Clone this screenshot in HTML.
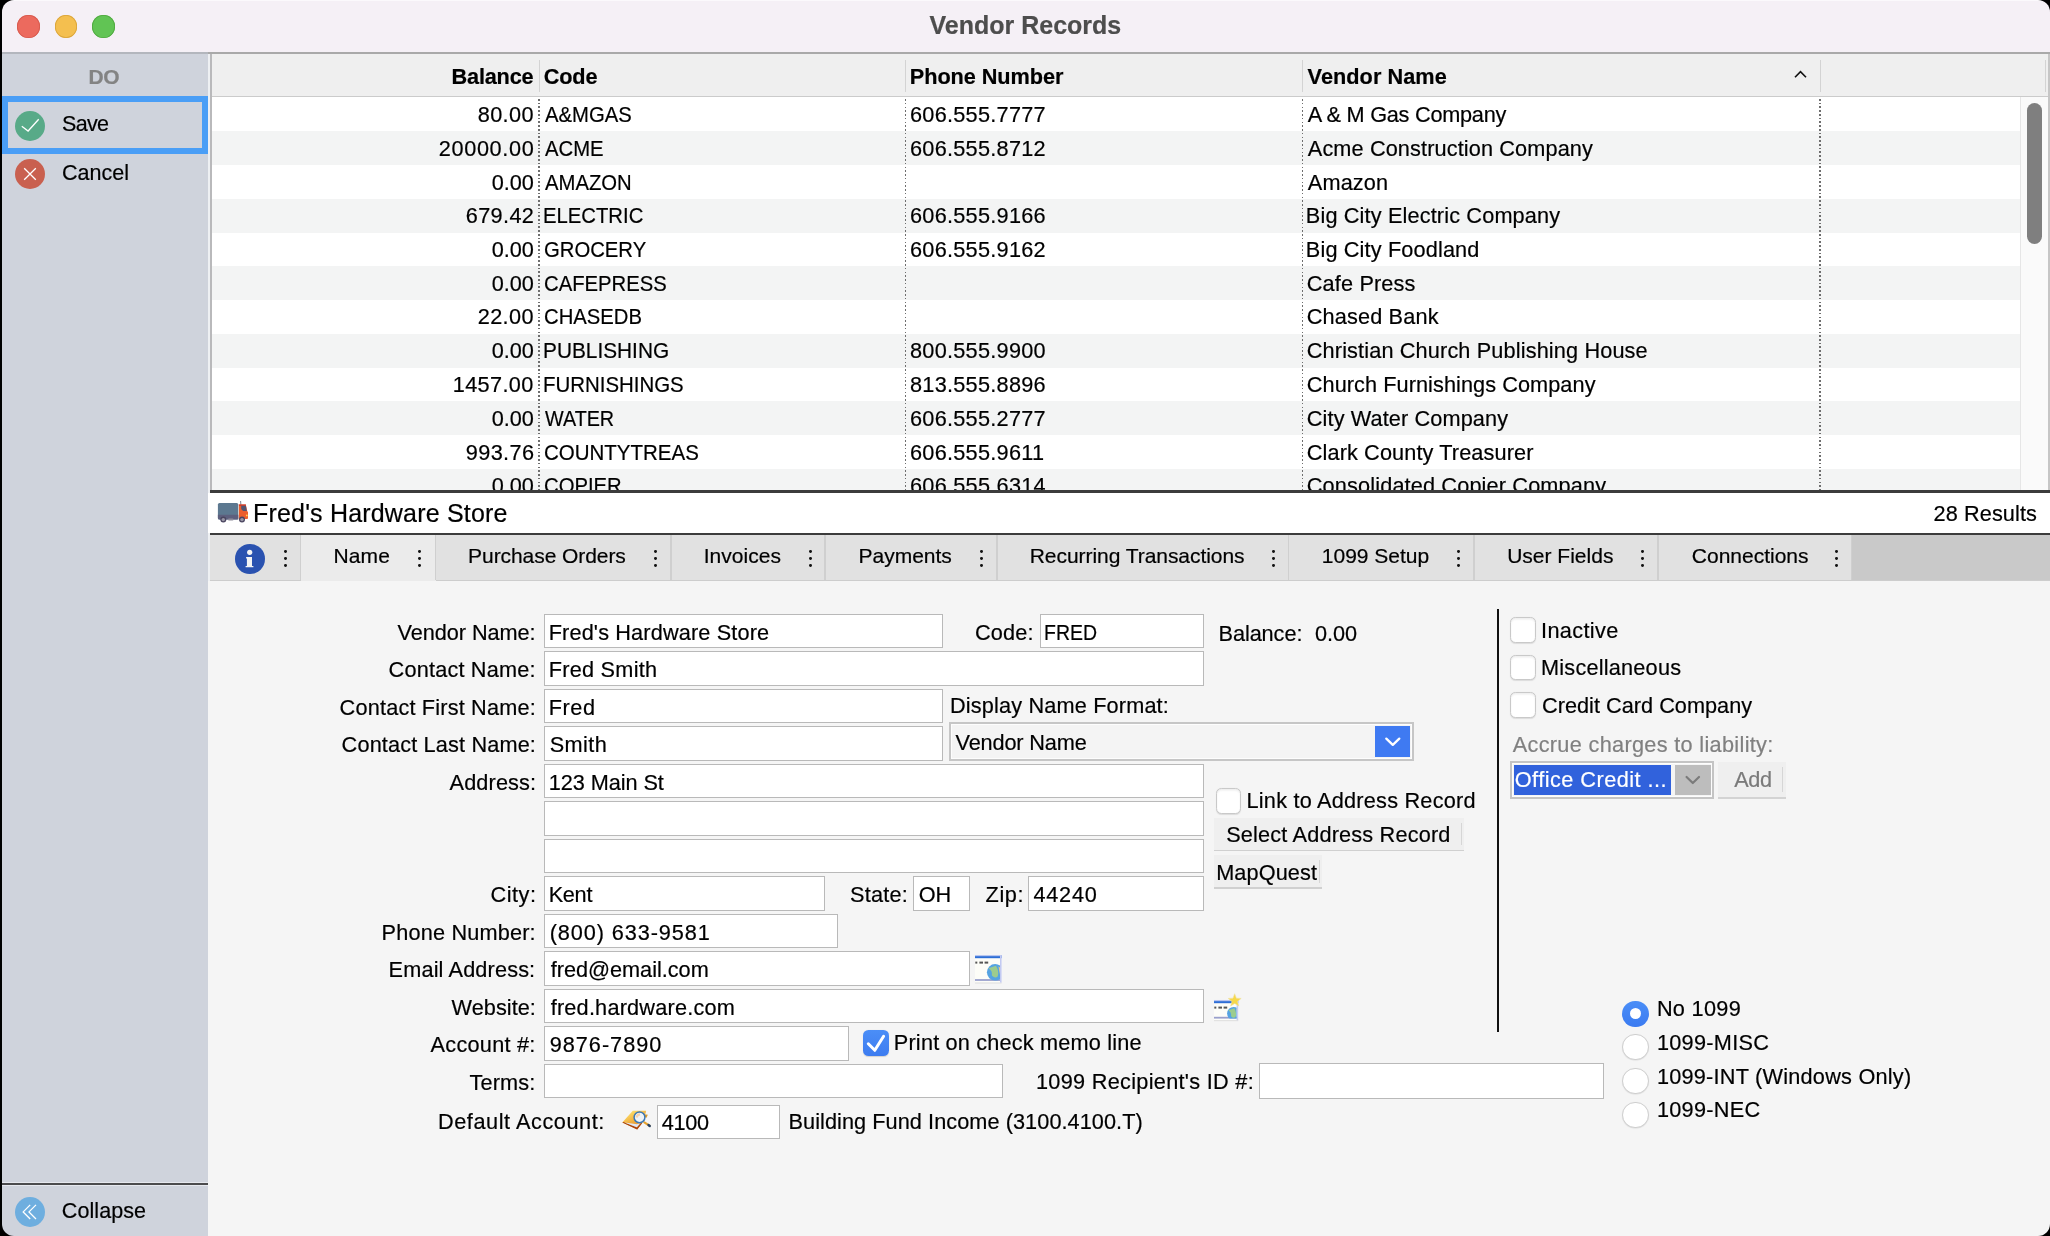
<!DOCTYPE html>
<html><head><meta charset="utf-8"><title>Vendor Records</title>
<style>
html,body{margin:0;padding:0;}
body{width:2050px;height:1236px;background:#000;overflow:hidden;position:relative;font-family:"Liberation Sans",sans-serif;color:#000;}
#win{will-change:transform;position:absolute;left:0;top:0;width:2050px;height:1236px;overflow:hidden;clip-path:inset(0 0 0 2px round 12px);}
.t{position:absolute;white-space:pre;-webkit-text-stroke:0.2px currentColor;}
.r{position:absolute;}
</style></head><body><div id="win">
<div class="r" style="left:2.00px;top:0.00px;width:2048.00px;height:52.50px;background:#f5f0f6;"></div>
<div class="r" style="left:2.00px;top:0.00px;width:2048.00px;height:1.00px;background:#fbf9fc;"></div>
<div class="r" style="left:2.00px;top:52.00px;width:206.00px;height:1.50px;background:#b3b6bd;"></div>
<div class="r" style="left:208.00px;top:52.00px;width:1842.00px;height:1.50px;background:#a9a9a9;"></div>
<div class="r" style="left:17.00px;top:15.00px;width:22.60px;height:22.60px;background:#ec6a5e;border-radius:50%;box-shadow:inset 0 0 0 0.8px #d65a4e;"></div>
<div class="r" style="left:54.60px;top:15.00px;width:22.60px;height:22.60px;background:#f4bf4f;border-radius:50%;box-shadow:inset 0 0 0 0.8px #d9a43a;"></div>
<div class="r" style="left:92.20px;top:15.00px;width:22.60px;height:22.60px;background:#61c454;border-radius:50%;box-shadow:inset 0 0 0 0.8px #4fa83f;"></div>
<div class="t" style="top:13px;font-size:25px;line-height:25px;font-weight:700;color:#4d4d4d;left:929.50px;">Vendor Records</div>
<div class="r" style="left:2.00px;top:53.50px;width:206.00px;height:1182.50px;background:#cfd3dc;"></div>
<div class="r" style="left:208.00px;top:53.50px;width:2.00px;height:1182.50px;background:#eef0f3;"></div>
<div class="r" style="left:210.00px;top:53.50px;width:1.80px;height:436.70px;background:#b9b9bb;"></div>
<div class="r" style="left:210.00px;top:490.20px;width:1.80px;height:745.80px;background:#eef0f3;"></div>
<div class="t" style="top:66px;font-size:21px;line-height:21px;font-weight:700;color:#838383;letter-spacing:-0.3px;left:88.50px;">DO</div>
<div class="r" style="left:2.00px;top:96.00px;width:206.00px;height:57.50px;box-sizing:border-box;border:6px solid #4a9ef6;"></div>
<div class="r" style="left:15.10px;top:110.80px;width:30.00px;height:30.00px;background:#58aa88;border-radius:50%;"></div>
<svg class="r" style="left:15.1px;top:110.8px" width="30" height="30" viewBox="0 0 30 30"><path d="M6.8 15.2 L13.1 20 L23.7 8.3" fill="none" stroke="#fff" stroke-width="1.3"/></svg>
<div class="t" style="top:114px;font-size:21.5px;line-height:21.5px;letter-spacing:-0.7px;left:62.10px;">Save</div>
<div class="r" style="left:15.10px;top:159.40px;width:30.00px;height:30.00px;background:#c9604f;border-radius:50%;"></div>
<svg class="r" style="left:15.1px;top:159.4px" width="30" height="30" viewBox="0 0 30 30"><path d="M9.2 9.2 L20.8 20.8 M20.8 9.2 L9.2 20.8" fill="none" stroke="#fff" stroke-width="1.3"/></svg>
<div class="t" style="top:163px;font-size:21.5px;line-height:21.5px;letter-spacing:-0.02px;left:62.10px;">Cancel</div>
<div class="r" style="left:2.00px;top:1182.30px;width:206.00px;height:0.70px;background:#e6e8ee;"></div>
<div class="r" style="left:2.00px;top:1183.00px;width:206.00px;height:2.30px;background:#4b4b4d;"></div>
<div class="r" style="left:2.00px;top:1185.30px;width:206.00px;height:0.90px;background:#e6e8ee;"></div>
<div class="r" style="left:15.10px;top:1196.70px;width:30.00px;height:30.00px;background:#6eaedf;border-radius:50%;"></div>
<svg class="r" style="left:15.1px;top:1196.7px" width="30" height="30" viewBox="0 0 30 30"><path d="M15.2 7.9 L8.2 14.9 L15.2 22 M21 7.9 L14 14.9 L21 22" fill="none" stroke="#fff" stroke-width="1.3"/></svg>
<div class="t" style="top:1201px;font-size:21.5px;line-height:21.5px;letter-spacing:0.086px;left:61.80px;">Collapse</div>
<div class="r" style="left:211.80px;top:53.50px;width:1838.20px;height:42.50px;background:#efefef;"></div>
<div class="r" style="left:211.80px;top:96.00px;width:1838.20px;height:1.60px;background:#cbcbcb;"></div>
<div class="r" style="left:211.8px;top:97px;width:1838.2px;height:393.20px;overflow:hidden;background:#fff">
<div class="t" style="top:7px;font-size:21.7px;line-height:21.7px;letter-spacing:0.35px;right:1516.17px;">80.00</div>
<div class="t" style="top:7px;font-size:21.7px;line-height:21.7px;transform:scaleX(0.935);transform-origin:0 0;left:333.10px;">A&amp;MGAS</div>
<div class="t" style="top:7px;font-size:21.7px;line-height:21.7px;letter-spacing:0.27px;left:698.20px;">606.555.7777</div>
<div class="t" style="top:7px;font-size:21.7px;line-height:21.7px;letter-spacing:-0.25px;left:1096.00px;">A &amp; M Gas Company</div>
<div class="r" style="left:0;top:34.35px;width:1808.50px;height:33.75px;background:#f3f4f4"></div>
<div class="t" style="top:41px;font-size:21.7px;line-height:21.7px;letter-spacing:0.643px;right:1515.59px;">20000.00</div>
<div class="t" style="top:41px;font-size:21.7px;line-height:21.7px;transform:scaleX(0.935);transform-origin:0 0;left:333.10px;">ACME</div>
<div class="t" style="top:41px;font-size:21.7px;line-height:21.7px;letter-spacing:0.27px;left:698.20px;">606.555.8712</div>
<div class="t" style="top:41px;font-size:21.7px;line-height:21.7px;letter-spacing:0.125px;left:1096.00px;">Acme Construction Company</div>
<div class="t" style="top:75px;font-size:21.7px;line-height:21.7px;letter-spacing:-0.033px;right:1516.11px;">0.00</div>
<div class="t" style="top:75px;font-size:21.7px;line-height:21.7px;transform:scaleX(0.935);transform-origin:0 0;left:333.10px;">AMAZON</div>
<div class="t" style="top:75px;font-size:21.7px;line-height:21.7px;letter-spacing:0.15px;left:1096.00px;">Amazon</div>
<div class="r" style="left:0;top:101.85px;width:1808.50px;height:33.75px;background:#f3f4f4"></div>
<div class="t" style="top:108px;font-size:21.7px;line-height:21.7px;letter-spacing:0.35px;right:1515.76px;">679.42</div>
<div class="t" style="top:108px;font-size:21.7px;line-height:21.7px;transform:scaleX(0.935);transform-origin:0 0;left:331.23px;">ELECTRIC</div>
<div class="t" style="top:108px;font-size:21.7px;line-height:21.7px;letter-spacing:0.27px;left:698.20px;">606.555.9166</div>
<div class="t" style="top:108px;font-size:21.7px;line-height:21.7px;letter-spacing:0.15px;left:1094.00px;">Big City Electric Company</div>
<div class="t" style="top:142px;font-size:21.7px;line-height:21.7px;letter-spacing:-0.033px;right:1516.11px;">0.00</div>
<div class="t" style="top:142px;font-size:21.7px;line-height:21.7px;transform:scaleX(0.935);transform-origin:0 0;left:332.17px;">GROCERY</div>
<div class="t" style="top:142px;font-size:21.7px;line-height:21.7px;letter-spacing:0.27px;left:698.20px;">606.555.9162</div>
<div class="t" style="top:142px;font-size:21.7px;line-height:21.7px;letter-spacing:0.15px;left:1094.00px;">Big City Foodland</div>
<div class="r" style="left:0;top:169.35px;width:1808.50px;height:33.75px;background:#f3f4f4"></div>
<div class="t" style="top:176px;font-size:21.7px;line-height:21.7px;letter-spacing:-0.033px;right:1516.11px;">0.00</div>
<div class="t" style="top:176px;font-size:21.7px;line-height:21.7px;transform:scaleX(0.935);transform-origin:0 0;left:332.17px;">CAFEPRESS</div>
<div class="t" style="top:176px;font-size:21.7px;line-height:21.7px;letter-spacing:0.15px;left:1095.00px;">Cafe Press</div>
<div class="t" style="top:209px;font-size:21.7px;line-height:21.7px;letter-spacing:0.35px;right:1516.17px;">22.00</div>
<div class="t" style="top:209px;font-size:21.7px;line-height:21.7px;transform:scaleX(0.935);transform-origin:0 0;left:332.17px;">CHASEDB</div>
<div class="t" style="top:209px;font-size:21.7px;line-height:21.7px;letter-spacing:0.15px;left:1095.00px;">Chased Bank</div>
<div class="r" style="left:0;top:236.85px;width:1808.50px;height:33.75px;background:#f3f4f4"></div>
<div class="t" style="top:243px;font-size:21.7px;line-height:21.7px;letter-spacing:-0.033px;right:1516.11px;">0.00</div>
<div class="t" style="top:243px;font-size:21.7px;line-height:21.7px;transform:scaleX(0.96);transform-origin:0 0;left:331.18px;">PUBLISHING</div>
<div class="t" style="top:243px;font-size:21.7px;line-height:21.7px;letter-spacing:0.27px;left:698.20px;">800.555.9900</div>
<div class="t" style="top:243px;font-size:21.7px;line-height:21.7px;letter-spacing:0.141px;left:1095.00px;">Christian Church Publishing House</div>
<div class="t" style="top:277px;font-size:21.7px;line-height:21.7px;letter-spacing:0.35px;right:1516.34px;">1457.00</div>
<div class="t" style="top:277px;font-size:21.7px;line-height:21.7px;transform:scaleX(0.942);transform-origin:0 0;left:331.22px;">FURNISHINGS</div>
<div class="t" style="top:277px;font-size:21.7px;line-height:21.7px;letter-spacing:0.27px;left:698.20px;">813.555.8896</div>
<div class="t" style="top:277px;font-size:21.7px;line-height:21.7px;letter-spacing:0.072px;left:1095.00px;">Church Furnishings Company</div>
<div class="r" style="left:0;top:304.35px;width:1808.50px;height:33.75px;background:#f3f4f4"></div>
<div class="t" style="top:311px;font-size:21.7px;line-height:21.7px;letter-spacing:-0.033px;right:1516.11px;">0.00</div>
<div class="t" style="top:311px;font-size:21.7px;line-height:21.7px;transform:scaleX(0.911);transform-origin:0 0;left:333.10px;">WATER</div>
<div class="t" style="top:311px;font-size:21.7px;line-height:21.7px;letter-spacing:0.27px;left:698.20px;">606.555.2777</div>
<div class="t" style="top:311px;font-size:21.7px;line-height:21.7px;letter-spacing:0.118px;left:1095.00px;">City Water Company</div>
<div class="t" style="top:345px;font-size:21.7px;line-height:21.7px;letter-spacing:0.38px;right:1515.58px;">993.76</div>
<div class="t" style="top:345px;font-size:21.7px;line-height:21.7px;transform:scaleX(0.945);transform-origin:0 0;left:332.15px;">COUNTYTREAS</div>
<div class="t" style="top:345px;font-size:21.7px;line-height:21.7px;letter-spacing:0.27px;left:698.20px;">606.555.9611</div>
<div class="t" style="top:345px;font-size:21.7px;line-height:21.7px;letter-spacing:0.114px;left:1095.00px;">Clark County Treasurer</div>
<div class="r" style="left:0;top:371.85px;width:1808.50px;height:33.75px;background:#f3f4f4"></div>
<div class="t" style="top:378px;font-size:21.7px;line-height:21.7px;letter-spacing:-0.033px;right:1516.11px;">0.00</div>
<div class="t" style="top:378px;font-size:21.7px;line-height:21.7px;transform:scaleX(0.935);transform-origin:0 0;left:332.17px;">COPIER</div>
<div class="t" style="top:378px;font-size:21.7px;line-height:21.7px;letter-spacing:0.27px;left:698.20px;">606.555.6314</div>
<div class="t" style="top:378px;font-size:21.7px;line-height:21.7px;letter-spacing:0.15px;left:1095.00px;">Consolidated Copier Company</div>
<div class="r" style="left:326.60px;top:1.60px;width:1.4px;height:400px;background:repeating-linear-gradient(to bottom,#6e6e6e 0,#6e6e6e 1.6px,transparent 1.6px,transparent 3.75px)"></div>
<div class="r" style="left:692.80px;top:1.60px;width:1.4px;height:400px;background:repeating-linear-gradient(to bottom,#6e6e6e 0,#6e6e6e 1.6px,transparent 1.6px,transparent 3.75px)"></div>
<div class="r" style="left:1090.30px;top:1.60px;width:1.4px;height:400px;background:repeating-linear-gradient(to bottom,#6e6e6e 0,#6e6e6e 1.6px,transparent 1.6px,transparent 3.75px)"></div>
<div class="r" style="left:1607.60px;top:1.60px;width:1.4px;height:400px;background:repeating-linear-gradient(to bottom,#6e6e6e 0,#6e6e6e 1.6px,transparent 1.6px,transparent 3.75px)"></div>
<div class="r" style="left:1808.50px;top:0;width:29.70px;height:400px;background:#fafafa;border-left:1px solid #e6e6e6;box-sizing:border-box"></div>
<div class="r" style="left:1815.50px;top:6.00px;width:15px;height:140.50px;background:#7f7f7f;border-radius:7.5px"></div>
</div>
<div class="t" style="top:66px;font-size:21.7px;line-height:21.7px;font-weight:700;letter-spacing:-0.2px;right:1516.60px;">Balance</div>
<div class="t" style="top:66px;font-size:21.7px;line-height:21.7px;font-weight:700;letter-spacing:-0.167px;left:543.80px;">Code</div>
<div class="t" style="top:66px;font-size:21.7px;line-height:21.7px;font-weight:700;letter-spacing:-0.055px;left:909.80px;">Phone Number</div>
<div class="t" style="top:66px;font-size:21.7px;line-height:21.7px;font-weight:700;letter-spacing:0.05px;left:1307.60px;">Vendor Name</div>
<div class="r" style="left:538.50px;top:60.00px;width:1.30px;height:31.70px;background:#d3d3d3;"></div>
<div class="r" style="left:904.70px;top:60.00px;width:1.30px;height:31.70px;background:#d3d3d3;"></div>
<div class="r" style="left:1302.20px;top:60.00px;width:1.30px;height:31.70px;background:#d3d3d3;"></div>
<div class="r" style="left:1819.50px;top:60.00px;width:1.30px;height:31.70px;background:#d3d3d3;"></div>
<div class="r" style="left:2044.50px;top:60.00px;width:1.30px;height:31.70px;background:#d3d3d3;"></div>
<svg class="r" style="left:1792px;top:68px" width="17" height="12" viewBox="0 0 17 12"><path d="M3 9.3 L8.5 3.6 L14 9.3" fill="none" stroke="#111" stroke-width="1.6"/></svg>
<div class="r" style="left:2048.00px;top:53.50px;width:2.00px;height:436.70px;background:#c6c6c6;"></div>
<div class="r" style="left:210.20px;top:490.20px;width:1839.80px;height:2.50px;background:#3c3c3c;"></div>
<div class="r" style="left:208.30px;top:492.70px;width:1841.70px;height:40.00px;background:#fff;"></div>
<div class="r" style="left:210.20px;top:532.70px;width:1839.80px;height:2.10px;background:#3c3c3c;"></div>
<svg class="r" style="left:212px;top:495px" width="44" height="35" viewBox="0 0 44 35"><rect x="5.9" y="7.9" width="20.4" height="16.7" rx="1.6" fill="#5c7890"/><path d="M5.9 19.8 H26.3 V24.6 H7.5 Q5.9 24.6 5.9 23 Z" fill="#5d5f7e"/><line x1="28.6" y1="6" x2="28.9" y2="10" stroke="#6b7280" stroke-width="0.9"/><path d="M26.9 9.5 H33.8 L35.3 16.2 L36 17 V23.5 L35 24.1 H26.9 Z" fill="#ec5f2e"/><rect x="26.9" y="9.5" width="7" height="1.3" fill="#d03528"/><path d="M29.2 10.8 H33.9 L34.8 15.9 H31.2 Q29.2 15 29.2 13.5 Z" fill="#515470"/><circle cx="34.8" cy="20.4" r="0.9" fill="#ffd84a"/><rect x="16" y="23.6" width="5.5" height="1.8" rx="0.9" fill="#8f8d9c"/><circle cx="11.3" cy="24.6" r="3" fill="#4b4660"/><circle cx="11.3" cy="24.6" r="1.7" fill="#9896a6"/><circle cx="30" cy="24.6" r="3" fill="#4b4660"/><circle cx="30" cy="24.6" r="1.7" fill="#9896a6"/></svg>
<div class="t" style="top:501px;font-size:25px;line-height:25px;letter-spacing:0.185px;left:253.00px;">Fred's Hardware Store</div>
<div class="t" style="top:503px;font-size:21.7px;line-height:21.7px;letter-spacing:0.1px;right:13.03px;">28 Results</div>
<div class="r" style="left:210.20px;top:534.80px;width:1839.80px;height:45.00px;background:#c9c9c9;"></div>
<div class="r" style="left:210.20px;top:579.80px;width:1839.80px;height:1.40px;background:#cdcdcd;"></div>
<div class="r" style="left:210.20px;top:534.80px;width:90.30px;height:45.00px;background:#e1e1e1;"></div>
<div class="r" style="left:283.85px;top:550.05px;width:2.90px;height:2.90px;background:#111;border-radius:50%;"></div>
<div class="r" style="left:283.85px;top:556.85px;width:2.90px;height:2.90px;background:#111;border-radius:50%;"></div>
<div class="r" style="left:283.85px;top:563.65px;width:2.90px;height:2.90px;background:#111;border-radius:50%;"></div>
<div class="r" style="left:300.50px;top:534.80px;width:135.00px;height:46.40px;background:#ebebeb;"></div>
<div class="r" style="left:299.50px;top:534.80px;width:1.80px;height:45.00px;background:#cfcfcf;"></div>
<div class="r" style="left:417.95px;top:550.05px;width:2.90px;height:2.90px;background:#111;border-radius:50%;"></div>
<div class="r" style="left:417.95px;top:556.85px;width:2.90px;height:2.90px;background:#111;border-radius:50%;"></div>
<div class="r" style="left:417.95px;top:563.65px;width:2.90px;height:2.90px;background:#111;border-radius:50%;"></div>
<div class="t" style="top:545px;font-size:21px;line-height:21px;letter-spacing:0.067px;left:333.60px;">Name</div>
<div class="r" style="left:435.50px;top:534.80px;width:235.30px;height:45.00px;background:#e1e1e1;"></div>
<div class="r" style="left:434.50px;top:534.80px;width:1.80px;height:45.00px;background:#cfcfcf;"></div>
<div class="r" style="left:653.95px;top:550.05px;width:2.90px;height:2.90px;background:#111;border-radius:50%;"></div>
<div class="r" style="left:653.95px;top:556.85px;width:2.90px;height:2.90px;background:#111;border-radius:50%;"></div>
<div class="r" style="left:653.95px;top:563.65px;width:2.90px;height:2.90px;background:#111;border-radius:50%;"></div>
<div class="t" style="top:545px;font-size:21px;line-height:21px;letter-spacing:-0.071px;left:468.10px;">Purchase Orders</div>
<div class="r" style="left:670.80px;top:534.80px;width:154.40px;height:45.00px;background:#e1e1e1;"></div>
<div class="r" style="left:669.80px;top:534.80px;width:1.80px;height:45.00px;background:#cfcfcf;"></div>
<div class="r" style="left:809.25px;top:550.05px;width:2.90px;height:2.90px;background:#111;border-radius:50%;"></div>
<div class="r" style="left:809.25px;top:556.85px;width:2.90px;height:2.90px;background:#111;border-radius:50%;"></div>
<div class="r" style="left:809.25px;top:563.65px;width:2.90px;height:2.90px;background:#111;border-radius:50%;"></div>
<div class="t" style="top:545px;font-size:21px;line-height:21px;letter-spacing:0.029px;left:703.70px;">Invoices</div>
<div class="r" style="left:825.20px;top:534.80px;width:171.80px;height:45.00px;background:#e1e1e1;"></div>
<div class="r" style="left:824.20px;top:534.80px;width:1.80px;height:45.00px;background:#cfcfcf;"></div>
<div class="r" style="left:980.05px;top:550.05px;width:2.90px;height:2.90px;background:#111;border-radius:50%;"></div>
<div class="r" style="left:980.05px;top:556.85px;width:2.90px;height:2.90px;background:#111;border-radius:50%;"></div>
<div class="r" style="left:980.05px;top:563.65px;width:2.90px;height:2.90px;background:#111;border-radius:50%;"></div>
<div class="t" style="top:545px;font-size:21px;line-height:21px;left:858.50px;">Payments</div>
<div class="r" style="left:997.00px;top:534.80px;width:291.60px;height:45.00px;background:#e1e1e1;"></div>
<div class="r" style="left:996.00px;top:534.80px;width:1.80px;height:45.00px;background:#cfcfcf;"></div>
<div class="r" style="left:1271.75px;top:550.05px;width:2.90px;height:2.90px;background:#111;border-radius:50%;"></div>
<div class="r" style="left:1271.75px;top:556.85px;width:2.90px;height:2.90px;background:#111;border-radius:50%;"></div>
<div class="r" style="left:1271.75px;top:563.65px;width:2.90px;height:2.90px;background:#111;border-radius:50%;"></div>
<div class="t" style="top:545px;font-size:21px;line-height:21px;letter-spacing:-0.048px;left:1029.70px;">Recurring Transactions</div>
<div class="r" style="left:1288.60px;top:534.80px;width:185.20px;height:45.00px;background:#e1e1e1;"></div>
<div class="r" style="left:1287.60px;top:534.80px;width:1.80px;height:45.00px;background:#cfcfcf;"></div>
<div class="r" style="left:1456.95px;top:550.05px;width:2.90px;height:2.90px;background:#111;border-radius:50%;"></div>
<div class="r" style="left:1456.95px;top:556.85px;width:2.90px;height:2.90px;background:#111;border-radius:50%;"></div>
<div class="r" style="left:1456.95px;top:563.65px;width:2.90px;height:2.90px;background:#111;border-radius:50%;"></div>
<div class="t" style="top:545px;font-size:21px;line-height:21px;left:1321.80px;">1099 Setup</div>
<div class="r" style="left:1473.80px;top:534.80px;width:184.20px;height:45.00px;background:#e1e1e1;"></div>
<div class="r" style="left:1472.80px;top:534.80px;width:1.80px;height:45.00px;background:#cfcfcf;"></div>
<div class="r" style="left:1641.05px;top:550.05px;width:2.90px;height:2.90px;background:#111;border-radius:50%;"></div>
<div class="r" style="left:1641.05px;top:556.85px;width:2.90px;height:2.90px;background:#111;border-radius:50%;"></div>
<div class="r" style="left:1641.05px;top:563.65px;width:2.90px;height:2.90px;background:#111;border-radius:50%;"></div>
<div class="t" style="top:545px;font-size:21px;line-height:21px;left:1507.20px;">User Fields</div>
<div class="r" style="left:1658.00px;top:534.80px;width:193.00px;height:45.00px;background:#e1e1e1;"></div>
<div class="r" style="left:1657.00px;top:534.80px;width:1.80px;height:45.00px;background:#cfcfcf;"></div>
<div class="r" style="left:1834.95px;top:550.05px;width:2.90px;height:2.90px;background:#111;border-radius:50%;"></div>
<div class="r" style="left:1834.95px;top:556.85px;width:2.90px;height:2.90px;background:#111;border-radius:50%;"></div>
<div class="r" style="left:1834.95px;top:563.65px;width:2.90px;height:2.90px;background:#111;border-radius:50%;"></div>
<div class="t" style="top:545px;font-size:21px;line-height:21px;left:1691.80px;">Connections</div>
<div class="r" style="left:1851.00px;top:534.80px;width:1.00px;height:45.00px;background:#cfcfcf;"></div>
<div class="r" style="left:234.80px;top:544.00px;width:29.80px;height:29.80px;background:#2a52b0;border-radius:50%;"></div>
<svg class="r" style="left:234.8px;top:544px" width="30" height="30" viewBox="0 0 30 30"><circle cx="14.7" cy="8.3" r="2.6" fill="#f4f4f4"/><path d="M11.1 13.1 H17 V22 H18.4 V23.3 H10.6 V22 H11.9 V14.5 H11.1 Z" fill="#f4f4f4"/></svg>
<div class="r" style="left:208.30px;top:581.20px;width:1841.70px;height:654.80px;background:#f5f5f5;"></div>
<div class="t" style="top:622px;font-size:21.7px;line-height:21.7px;letter-spacing:-0.055px;right:1514.42px;">Vendor Name:</div>
<div class="t" style="top:659px;font-size:21.7px;line-height:21.7px;letter-spacing:0.183px;right:1514.37px;">Contact Name:</div>
<div class="t" style="top:697px;font-size:21.7px;line-height:21.7px;letter-spacing:0.183px;right:1514.09px;">Contact First Name:</div>
<div class="t" style="top:734px;font-size:21.7px;line-height:21.7px;letter-spacing:0.153px;right:1513.98px;">Contact Last Name:</div>
<div class="t" style="top:772px;font-size:21.7px;line-height:21.7px;letter-spacing:0.114px;right:1513.90px;">Address:</div>
<div class="t" style="top:884px;font-size:21.7px;line-height:21.7px;letter-spacing:0.5px;right:1513.52px;">City:</div>
<div class="t" style="top:922px;font-size:21.7px;line-height:21.7px;letter-spacing:0.175px;right:1514.21px;">Phone Number:</div>
<div class="t" style="top:959px;font-size:21.7px;line-height:21.7px;letter-spacing:0.146px;right:1514.71px;">Email Address:</div>
<div class="t" style="top:997px;font-size:21.7px;line-height:21.7px;letter-spacing:0.043px;right:1514.07px;">Website:</div>
<div class="t" style="top:1034px;font-size:21.7px;line-height:21.7px;letter-spacing:0.256px;right:1514.35px;">Account #:</div>
<div class="t" style="top:1072px;font-size:21.7px;line-height:21.7px;letter-spacing:0.12px;right:1514.62px;">Terms:</div>
<div class="r" style="left:544.40px;top:613.60px;width:398.80px;height:34.80px;background:#fff;box-sizing:border-box;border:1.3px solid #b9b9b9;"></div>
<div class="t" style="top:622px;font-size:21.7px;line-height:21.7px;letter-spacing:0.145px;left:548.70px;">Fred's Hardware Store</div>
<div class="t" style="top:622px;font-size:21.7px;line-height:21.7px;letter-spacing:0.175px;right:1016.25px;">Code:</div>
<div class="r" style="left:1039.50px;top:613.60px;width:164.30px;height:34.80px;background:#fff;box-sizing:border-box;border:1.3px solid #b9b9b9;"></div>
<div class="t" style="top:622px;font-size:21.7px;line-height:21.7px;transform:scaleX(0.898);transform-origin:0 0;left:1044.00px;">FRED</div>
<div class="t" style="top:623px;font-size:21.7px;line-height:21.7px;letter-spacing:-0.071px;left:1218.50px;">Balance:</div>
<div class="t" style="top:623px;font-size:21.7px;line-height:21.7px;letter-spacing:-0.033px;left:1315.00px;">0.00</div>
<div class="r" style="left:544.40px;top:651.10px;width:659.40px;height:34.80px;background:#fff;box-sizing:border-box;border:1.3px solid #b9b9b9;"></div>
<div class="t" style="top:659px;font-size:21.7px;line-height:21.7px;letter-spacing:0.256px;left:548.70px;">Fred Smith</div>
<div class="r" style="left:544.40px;top:688.60px;width:398.80px;height:34.80px;background:#fff;box-sizing:border-box;border:1.3px solid #b9b9b9;"></div>
<div class="t" style="top:697px;font-size:21.7px;line-height:21.7px;letter-spacing:0.567px;left:548.70px;">Fred</div>
<div class="t" style="top:695px;font-size:21.7px;line-height:21.7px;letter-spacing:0.163px;left:950.00px;">Display Name Format:</div>
<div class="r" style="left:544.40px;top:726.10px;width:398.80px;height:34.80px;background:#fff;box-sizing:border-box;border:1.3px solid #b9b9b9;"></div>
<div class="t" style="top:734px;font-size:21.7px;line-height:21.7px;letter-spacing:0.425px;left:549.70px;">Smith</div>
<div class="r" style="left:949.00px;top:722.20px;width:465.00px;height:38.80px;background:#f4f4f4;box-sizing:border-box;border:2px solid #c6c6c6;box-shadow:inset 0 0 0 1px #fdfdfd;"></div>
<div class="r" style="left:1374.80px;top:725.90px;width:35.40px;height:31.60px;background:#3f7af2;"></div>
<svg class="r" style="left:1374.8px;top:725.9px" width="35.4" height="31.6" viewBox="0 0 35.4 31.6"><path d="M11.3 12.6 L17.8 18.9 L24.3 12.6" fill="none" stroke="#fff" stroke-width="2.3" stroke-linecap="round" stroke-linejoin="round"/></svg>
<div class="t" style="top:732px;font-size:21.7px;line-height:21.7px;letter-spacing:-0.15px;left:955.60px;">Vendor Name</div>
<div class="r" style="left:544.40px;top:763.60px;width:659.40px;height:34.80px;background:#fff;box-sizing:border-box;border:1.3px solid #b9b9b9;"></div>
<div class="t" style="top:772px;font-size:21.7px;line-height:21.7px;letter-spacing:-0.06px;left:548.70px;">123 Main St</div>
<div class="r" style="left:544.40px;top:801.10px;width:659.40px;height:34.80px;background:#fff;box-sizing:border-box;border:1.3px solid #b9b9b9;"></div>
<div class="r" style="left:544.40px;top:838.60px;width:659.40px;height:34.80px;background:#fff;box-sizing:border-box;border:1.3px solid #b9b9b9;"></div>
<div class="r" style="left:1215.50px;top:788.30px;width:25.50px;height:25.50px;background:#fff;border-radius:5.5px;box-sizing:border-box;border:1px solid #c9c9c9;box-shadow:0 0.5px 1px rgba(0,0,0,0.10), inset 0 1.5px 2px rgba(0,0,0,0.07);"></div>
<div class="t" style="top:790px;font-size:21.7px;line-height:21.7px;letter-spacing:0.229px;left:1246.50px;">Link to Address Record</div>
<div class="r" style="left:1214.00px;top:818.30px;width:250.00px;height:31.60px;background:#efefef;"></div>
<div class="r" style="left:1214.00px;top:849.90px;width:250.00px;height:1.30px;background:#d0d0d0;"></div>
<div class="r" style="left:1461.00px;top:823.30px;width:1.20px;height:21.90px;background:#d6d6d6;"></div>
<div class="t" style="top:824px;font-size:21.7px;line-height:21.7px;letter-spacing:0.18px;left:1226.20px;">Select Address Record</div>
<div class="r" style="left:1214.00px;top:855.40px;width:107.80px;height:31.90px;background:#efefef;"></div>
<div class="r" style="left:1214.00px;top:887.30px;width:107.80px;height:1.30px;background:#d0d0d0;"></div>
<div class="r" style="left:1318.80px;top:860.40px;width:1.20px;height:22.20px;background:#d6d6d6;"></div>
<div class="t" style="top:862px;font-size:21.7px;line-height:21.7px;letter-spacing:0.1px;left:1216.20px;">MapQuest</div>
<div class="r" style="left:544.40px;top:876.10px;width:280.20px;height:34.80px;background:#fff;box-sizing:border-box;border:1.3px solid #b9b9b9;"></div>
<div class="t" style="top:884px;font-size:21.7px;line-height:21.7px;letter-spacing:-0.3px;left:548.70px;">Kent</div>
<div class="t" style="top:884px;font-size:21.7px;line-height:21.7px;letter-spacing:0.24px;right:1141.89px;">State:</div>
<div class="r" style="left:913.40px;top:876.10px;width:56.30px;height:34.80px;background:#fff;box-sizing:border-box;border:1.3px solid #b9b9b9;"></div>
<div class="t" style="top:884px;font-size:21.7px;line-height:21.7px;left:918.70px;">OH</div>
<div class="t" style="top:884px;font-size:21.7px;line-height:21.7px;letter-spacing:0.633px;right:1025.81px;">Zip:</div>
<div class="r" style="left:1028.30px;top:876.10px;width:175.50px;height:34.80px;background:#fff;box-sizing:border-box;border:1.3px solid #b9b9b9;"></div>
<div class="t" style="top:884px;font-size:21.7px;line-height:21.7px;letter-spacing:0.7px;left:1033.60px;">44240</div>
<div class="r" style="left:544.40px;top:913.60px;width:293.60px;height:34.80px;background:#fff;box-sizing:border-box;border:1.3px solid #b9b9b9;"></div>
<div class="t" style="top:922px;font-size:21.7px;line-height:21.7px;letter-spacing:0.9px;left:549.70px;">(800) 633-9581</div>
<div class="r" style="left:544.40px;top:951.10px;width:425.30px;height:34.80px;background:#fff;box-sizing:border-box;border:1.3px solid #b9b9b9;"></div>
<div class="t" style="top:959px;font-size:21.7px;line-height:21.7px;letter-spacing:-0.015px;left:550.70px;">fred@email.com</div>
<svg class="r" style="left:969px;top:941px" width="40.6" height="43.5" viewBox="-6 -14 40.6 43.5"><rect x="0" y="26.5" width="26.6" height="2" fill="#dcdcdc"/><rect x="0" y="0" width="26.6" height="27.5" fill="#fdfdf8"/><rect x="0" y="0" width="26.6" height="3.2" fill="#2e6ed6"/><rect x="0" y="0" width="26.6" height="1.2" fill="#b9c6f0"/><rect x="25.0" y="0" width="1.6" height="27.5" fill="#c3caf2"/><rect x="0" y="24.1" width="25.0" height="1.8" fill="#9aa0cc"/><rect x="0.3" y="6.6" width="2" height="2" fill="#555"/><rect x="4.4" y="6.6" width="3.6" height="2" fill="#555"/><rect x="9.6" y="6.6" width="3.6" height="2" fill="#555"/><clipPath id="gc975"><rect x="0" y="0" width="25.0" height="25.9"/></clipPath><g clip-path="url(#gc975)"><circle cx="20.2" cy="17.3" r="8.3" fill="#55a3e2"/><path d="M13.56 13.15 Q17.71 15.64 16.88 20.62 Q20.20 23.94 22.69 21.45 Q24.35 16.47 21.03 10.66 Z" fill="#9ccc8e"/><path d="M23.52 11.49 Q28.50 14.81 28.50 19.79 L26.01 23.94 Q24.35 17.30 23.52 11.49 Z" fill="#e9c98a"/></g></svg>
<div class="r" style="left:544.40px;top:988.60px;width:659.40px;height:34.80px;background:#fff;box-sizing:border-box;border:1.3px solid #b9b9b9;"></div>
<div class="t" style="top:997px;font-size:21.7px;line-height:21.7px;letter-spacing:0.206px;left:550.70px;">fred.hardware.com</div>
<svg class="r" style="left:1207.8px;top:986px" width="38.2" height="36.2" viewBox="-6 -14 38.2 36.2"><rect x="0" y="19.2" width="24.2" height="2" fill="#dcdcdc"/><rect x="0" y="0" width="24.2" height="20.2" fill="#fdfdf8"/><rect x="0" y="0" width="24.2" height="3.2" fill="#2e6ed6"/><rect x="0" y="0" width="24.2" height="1.2" fill="#b9c6f0"/><rect x="22.599999999999998" y="0" width="1.6" height="20.2" fill="#c3caf2"/><rect x="0" y="16.8" width="22.599999999999998" height="1.8" fill="#9aa0cc"/><rect x="0.3" y="6.6" width="2" height="2" fill="#555"/><rect x="4.4" y="6.6" width="3.6" height="2" fill="#555"/><rect x="9.6" y="6.6" width="3.6" height="2" fill="#555"/><clipPath id="gc1213"><rect x="0" y="0" width="22.599999999999998" height="18.599999999999998"/></clipPath><g clip-path="url(#gc1213)"><circle cx="19.7" cy="13.5" r="6.6" fill="#55a3e2"/><path d="M14.42 10.20 Q17.72 12.18 17.06 16.14 Q19.70 18.78 21.68 16.80 Q23.00 12.84 20.36 8.22 Z" fill="#9ccc8e"/><path d="M22.34 8.88 Q26.30 11.52 26.30 15.48 L24.32 18.78 Q23.00 13.50 22.34 8.88 Z" fill="#e9c98a"/></g><polygon points="20.70,-6.30 22.40,-1.85 27.17,-1.60 23.46,1.40 24.70,6.00 20.70,3.40 16.70,6.00 17.94,1.40 14.23,-1.60 19.00,-1.85" fill="#f6d84a" stroke="#f0e0a0" stroke-width="0.6"/></svg>
<div class="r" style="left:544.40px;top:1026.10px;width:305.10px;height:34.80px;background:#fff;box-sizing:border-box;border:1.3px solid #b9b9b9;"></div>
<div class="t" style="top:1034px;font-size:21.7px;line-height:21.7px;letter-spacing:0.988px;left:549.70px;">9876-7890</div>
<div class="r" style="left:862.80px;top:1029.80px;width:26.00px;height:26.00px;background:linear-gradient(#4b8ef7,#3d7cf0);border-radius:5.5px;box-shadow:0 0.5px 1px rgba(0,0,0,0.15);"></div>
<svg class="r" style="left:862.8px;top:1029.8px" width="26" height="26" viewBox="0 0 26 26"><path d="M5.3 13.8 L11.8 20.3 L20.6 6.3" fill="none" stroke="#fff" stroke-width="3" stroke-linecap="round" stroke-linejoin="round"/></svg>
<div class="t" style="top:1032px;font-size:21.7px;line-height:21.7px;letter-spacing:0.191px;left:893.80px;">Print on check memo line</div>
<div class="r" style="left:544.40px;top:1063.60px;width:458.60px;height:34.80px;background:#fff;box-sizing:border-box;border:1.3px solid #b9b9b9;"></div>
<div class="t" style="top:1071px;font-size:21.7px;line-height:21.7px;letter-spacing:0.295px;right:796.00px;">1099 Recipient's ID #:</div>
<div class="r" style="left:1258.90px;top:1063.40px;width:344.70px;height:35.40px;background:#fff;box-sizing:border-box;border:1.3px solid #b9b9b9;"></div>
<div class="t" style="top:1111px;font-size:21.7px;line-height:21.7px;letter-spacing:0.56px;right:1445.09px;">Default Account:</div>
<svg class="r" style="left:612px;top:1100px" width="48" height="40" viewBox="0 0 48 40"><defs><linearGradient id="fold" x1="0" y1="0" x2="0.6" y2="1"><stop offset="0" stop-color="#fff27a"/><stop offset="0.55" stop-color="#f3b544"/><stop offset="1" stop-color="#e0892c"/></linearGradient></defs><path d="M10.3 22.6 L20.8 10.7 H34 L33.8 12.5 L30.1 23.3 L25.2 29.4 Z" fill="url(#fold)"/><path d="M10.3 22.6 L25.2 29.4 L30.1 23.3 L29 23 L25 27.6 L11.5 22 Z" fill="#a8410f"/><path d="M12.5 22.5 L24.8 27.2 L28.4 23.1 L25 24.2 Z" fill="#dfe6f5"/><path d="M32 14.2 L35.8 14.8 L34.5 17.8 L31.5 16.8 Z" fill="#d89a2a"/><line x1="32.3" y1="22.4" x2="37.6" y2="25.8" stroke="#e5a22f" stroke-width="2.2" stroke-linecap="round"/><line x1="36.4" y1="25" x2="37.8" y2="26" stroke="#1f3f6a" stroke-width="2.2" stroke-linecap="round"/><circle cx="27.5" cy="17.3" r="5.4" fill="#eef3f6" stroke="#3b78b5" stroke-width="1.5"/><path d="M24.5 17.5 Q25 14.5 28 14.3" fill="none" stroke="#f3d2b0" stroke-width="2.2"/></svg>
<div class="r" style="left:656.60px;top:1104.80px;width:123.40px;height:34.70px;background:#fff;box-sizing:border-box;border:1.3px solid #b9b9b9;"></div>
<div class="t" style="top:1112px;font-size:21.7px;line-height:21.7px;letter-spacing:-0.367px;left:661.80px;">4100</div>
<div class="t" style="top:1111px;font-size:21.7px;line-height:21.7px;letter-spacing:0.067px;left:788.50px;">Building Fund Income (3100.4100.T)</div>
<div class="r" style="left:1496.80px;top:609.30px;width:2.20px;height:423.20px;background:#111;"></div>
<div class="r" style="left:1510.20px;top:617.20px;width:25.50px;height:25.50px;background:#fff;border-radius:5.5px;box-sizing:border-box;border:1px solid #c9c9c9;box-shadow:0 0.5px 1px rgba(0,0,0,0.10), inset 0 1.5px 2px rgba(0,0,0,0.07);"></div>
<div class="t" style="top:620px;font-size:21.7px;line-height:21.7px;letter-spacing:0.371px;left:1541.00px;">Inactive</div>
<div class="r" style="left:1510.20px;top:654.80px;width:25.50px;height:25.50px;background:#fff;border-radius:5.5px;box-sizing:border-box;border:1px solid #c9c9c9;box-shadow:0 0.5px 1px rgba(0,0,0,0.10), inset 0 1.5px 2px rgba(0,0,0,0.07);"></div>
<div class="t" style="top:657px;font-size:21.7px;line-height:21.7px;letter-spacing:0.217px;left:1541.00px;">Miscellaneous</div>
<div class="r" style="left:1510.20px;top:692.20px;width:25.50px;height:25.50px;background:#fff;border-radius:5.5px;box-sizing:border-box;border:1px solid #c9c9c9;box-shadow:0 0.5px 1px rgba(0,0,0,0.10), inset 0 1.5px 2px rgba(0,0,0,0.07);"></div>
<div class="t" style="top:695px;font-size:21.7px;line-height:21.7px;letter-spacing:0.022px;left:1542.00px;">Credit Card Company</div>
<div class="t" style="top:734px;font-size:21.7px;line-height:21.7px;color:#808080;letter-spacing:0.322px;left:1512.70px;">Accrue charges to liability:</div>
<div class="r" style="left:1510.00px;top:761.00px;width:204.00px;height:38.00px;background:#f5f5f5;box-sizing:border-box;border:2px solid #c4c4c4;box-shadow:inset 0 0 0 1px #fdfdfd;"></div>
<div class="r" style="left:1513.90px;top:765.00px;width:157.10px;height:29.90px;background:#3162dc;"></div>
<div class="t" style="top:769px;font-size:21.7px;line-height:21.7px;color:#fff;letter-spacing:0.481px;left:1514.70px;">Office Credit ...</div>
<div class="r" style="left:1675.20px;top:765.00px;width:35.60px;height:29.90px;background:#bdbdbd;"></div>
<svg class="r" style="left:1675.2px;top:765px" width="35.6" height="30" viewBox="0 0 35.6 30"><path d="M11.6 12 L17.8 18 L24 12" fill="none" stroke="#7b7b7b" stroke-width="2.2" stroke-linecap="round" stroke-linejoin="round"/></svg>
<div class="r" style="left:1718.30px;top:761.60px;width:67.30px;height:35.70px;background:#efefef;"></div>
<div class="r" style="left:1718.30px;top:797.30px;width:67.30px;height:1.30px;background:#d3d3d3;"></div>
<div class="r" style="left:1782.20px;top:767.00px;width:1.20px;height:25.00px;background:#d6d6d6;"></div>
<div class="t" style="top:769px;font-size:21.7px;line-height:21.7px;color:#7a7a7a;letter-spacing:-0.35px;left:1734.20px;">Add</div>
<div class="r" style="left:1622.40px;top:1000.60px;width:26.20px;height:26.20px;background:linear-gradient(#4a8ef7,#3b7bf1);border-radius:50%;"></div>
<div class="r" style="left:1630.00px;top:1008.20px;width:11.00px;height:11.00px;background:#fff;border-radius:50%;"></div>
<div class="t" style="top:998px;font-size:21.7px;line-height:21.7px;letter-spacing:0.317px;left:1656.90px;">No 1099</div>
<div class="r" style="left:1622.40px;top:1034.30px;width:26.20px;height:26.20px;background:#fff;border-radius:50%;box-sizing:border-box;border:1px solid #cfcfcf;box-shadow:0 0.5px 1px rgba(0,0,0,0.1);"></div>
<div class="t" style="top:1032px;font-size:21.7px;line-height:21.7px;letter-spacing:0.3px;left:1656.90px;">1099-MISC</div>
<div class="r" style="left:1622.40px;top:1068.20px;width:26.20px;height:26.20px;background:#fff;border-radius:50%;box-sizing:border-box;border:1px solid #cfcfcf;box-shadow:0 0.5px 1px rgba(0,0,0,0.1);"></div>
<div class="t" style="top:1066px;font-size:21.7px;line-height:21.7px;letter-spacing:0.236px;left:1656.90px;">1099-INT (Windows Only)</div>
<div class="r" style="left:1622.40px;top:1101.90px;width:26.20px;height:26.20px;background:#fff;border-radius:50%;box-sizing:border-box;border:1px solid #cfcfcf;box-shadow:0 0.5px 1px rgba(0,0,0,0.1);"></div>
<div class="t" style="top:1099px;font-size:21.7px;line-height:21.7px;letter-spacing:0.286px;left:1656.90px;">1099-NEC</div>
</div></body></html>
